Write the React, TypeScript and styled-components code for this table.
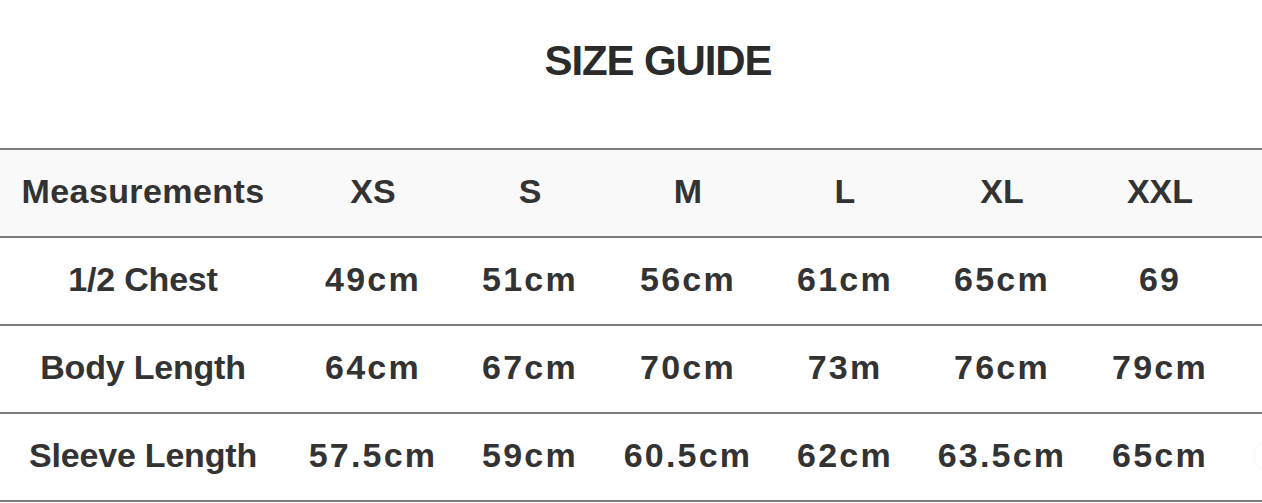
import styled, { createGlobalStyle } from "styled-components";

const GlobalStyle = createGlobalStyle`
  html, body {
    margin: 0;
    padding: 0;
    background: #fff;
    overflow: hidden;
  }
  body {
    font-family: "Liberation Sans", Arial, Helvetica, sans-serif;
    color: #333;
  }
`;

const COLUMNS = "286px 174px 140px 176px 138px 176px 140px 86px";

const Wrapper = styled.div`
  width: 1316px;
`;

const Title = styled.h1`
  margin: 0;
  padding-top: 40px;
  margin-bottom: 66px;
  height: 42px;
  line-height: 42px;
  text-align: center;
  font-size: 42px;
  font-weight: 700;
  letter-spacing: -1.1px;
  color: #2b2b2b;
`;

const Table = styled.div`
  border-top: 2px solid #7d7d7d;
`;

const Row = styled.div<{ head?: boolean }>`
  display: grid;
  grid-template-columns: ${COLUMNS};
  height: 86px;
  border-bottom: 2px solid #7d7d7d;
  background: ${({ head }) => (head ? "#f9f9f9" : "#fff")};
`;

const Cell = styled.div<{ spacing?: string }>`
  display: flex;
  align-items: center;
  justify-content: center;
  padding-bottom: 3px;
  font-size: 34px;
  font-weight: 700;
  letter-spacing: ${({ spacing }) => spacing || "0"};
  color: #333;
  white-space: nowrap;
`;

const Ghost = styled.span`
  display: block;
  width: 36px;
  height: 36px;
  border-radius: 50%;
  border: 1px solid #f5f5f5;
  border-right-color: transparent;
`;

const header = ["Measurements", "XS", "S", "M", "L", "XL", "XXL"];

const rows = [
  ["1/2 Chest", "49cm", "51cm", "56cm", "61cm", "65cm", "69"],
  ["Body Length", "64cm", "67cm", "70cm", "73m", "76cm", "79cm"],
  ["Sleeve Length", "57.5cm", "59cm", "60.5cm", "62cm", "63.5cm", "65cm"],
];

const App = (): JSX.Element => {
  return (
    <Wrapper>
      <GlobalStyle />
      <Title>SIZE GUIDE</Title>
      <Table>
        <Row head>
          {header.map((h, j) => (
            <Cell key={h} spacing={j === 0 ? "0.4px" : "0"}>
              {h}
            </Cell>
          ))}
          <Cell />
        </Row>
        {rows.map((r, i) => (
          <Row key={r[0]}>
            {r.map((c, j) => (
              <Cell key={j} spacing={j > 0 ? "2.2px" : "-0.2px"}>
                {c}
              </Cell>
            ))}
            <Cell>{i === rows.length - 1 ? <Ghost /> : null}</Cell>
          </Row>
        ))}
      </Table>
    </Wrapper>
  );
};

export default App;
